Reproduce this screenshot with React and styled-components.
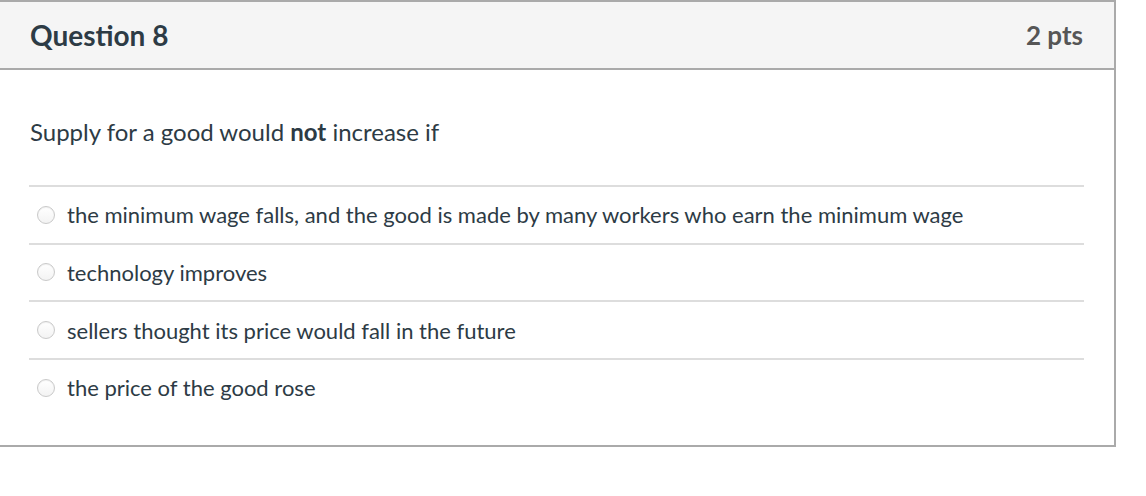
import React from "react";
import styled, { createGlobalStyle } from "styled-components";

const Global = createGlobalStyle`
  html, body { margin: 0; padding: 0; background: #fff; }
  body { font-family: Lato, "Open Sans", sans-serif; color: #2d3b45; }
`;

const Card = styled.div`
  width: 1114px;
  border: 2px solid #aaaaaa;
  border-left: none;
  background: #fff;
`;

const Header = styled.div`
  display: flex;
  align-items: center;
  justify-content: space-between;
  height: 66px;
  padding: 0 31px 0 30px;
  background: #f5f5f5;
  border-bottom: 2px solid #aaaaaa;
`;

const Title = styled.h2`
  margin: 0;
  font-size: 28px;
  line-height: 34px;
  font-weight: 700;
  color: #2d3b45;
`;

const Points = styled.div`
  font-size: 26px;
  line-height: 34px;
  font-weight: 700;
  color: #565656;
`;

const Body = styled.div`
  padding: 48px 30px 29px 29px;
`;

const QuestionText = styled.p`
  margin: 0 0 0 1px;
  font-size: 24px;
  line-height: 28px;
`;

const Answers = styled.div`
  margin-top: 39px;
`;

const Answer = styled.label`
  display: flex;
  align-items: center;
  gap: 12px;
  height: 55.67px;
  padding-left: 8px;
  border-top: 2px solid #dddddd;
  font-size: 22px;
`;

const Radio = styled.span`
  width: 16px;
  height: 16px;
  border-radius: 50%;
  border: 1px solid #c9c9c9;
  background: linear-gradient(#ffffff, #f3f3f3);
  box-shadow: inset 0 1px 1px rgba(0, 0, 0, 0.06);
  flex-shrink: 0;
`;

const answers = [
  "the minimum wage falls, and the good is made by many workers who earn the minimum wage",
  "technology improves",
  "sellers thought its price would fall in the future",
  "the price of the good rose",
];

export default function App() {
  return (
    <>
      <Global />
      <Card>
        <Header>
          <Title>Question 8</Title>
          <Points>2 pts</Points>
        </Header>
        <Body>
          <QuestionText>
            Supply for a good would <strong>not</strong> increase if
          </QuestionText>
          <Answers>
            {answers.map((a) => (
              <Answer key={a}>
                <Radio />
                <span>{a}</span>
              </Answer>
            ))}
          </Answers>
        </Body>
      </Card>
    </>
  );
}
